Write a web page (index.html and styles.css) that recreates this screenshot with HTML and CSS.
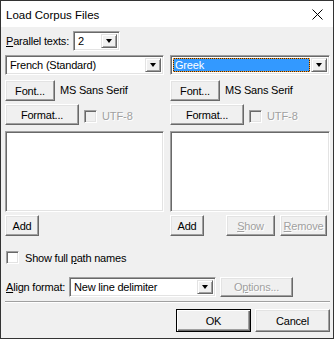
FILE: index.html
```html
<!DOCTYPE html>
<html>
<head>
<meta charset="utf-8">
<link rel="stylesheet" href="styles.css">
</head>
<body>
<div class="window">
  <div class="titlebar">
    <span class="title">Load Corpus Files</span>
    <svg class="close" width="11" height="11" viewBox="0 0 11 11"><path d="M0.5 0.5 L10.5 10.5 M10.5 0.5 L0.5 10.5" stroke="#000" stroke-width="1" fill="none"/></svg>
  </div>
  <div class="content">
    <div class="row parallel">
      <span class="label"><u>P</u>arallel texts:</span>
      <div class="combo combo-par"><span class="val">2</span><span class="arrow"></span></div>
    </div>
    <div class="cols">
      <div class="col">
        <div class="combo combo-lang"><span class="val">French (Standard)</span><span class="arrow"></span></div>
        <div class="row fontrow"><button class="btn btn-font">Font...</button><span class="fontname">MS Sans Serif</span></div>
        <div class="row formatrow"><button class="btn btn-format">Format...</button><span class="chk chk-dis"></span><span class="dis">UTF-8</span></div>
        <div class="listbox"></div>
        <div class="row addrow"><button class="btn btn-add">Add</button></div>
      </div>
      <div class="col">
        <div class="combo combo-lang"><span class="val sel"><span class="selbox">Greek</span></span><span class="arrow"></span></div>
        <div class="row fontrow"><button class="btn btn-font">Font...</button><span class="fontname">MS Sans Serif</span></div>
        <div class="row formatrow"><button class="btn btn-format">Format...</button><span class="chk chk-dis"></span><span class="dis">UTF-8</span></div>
        <div class="listbox"></div>
        <div class="row addrow"><button class="btn btn-add">Add</button><button class="btn btn-show dis"><u>S</u>how</button><button class="btn btn-remove dis"><u>R</u>emove</button></div>
      </div>
    </div>
    <div class="row checkrow"><span class="chk"></span><span class="label">Show full <u>p</u>ath names</span></div>
    <div class="row alignrow">
      <span class="label"><u>A</u>lign format:</span>
      <div class="combo combo-align"><span class="val">New line delimiter</span><span class="arrow"></span></div>
      <button class="btn btn-options dis">O<u>p</u>tions...</button>
    </div>
    <div class="sep"></div>
    <div class="row buttons">
      <button class="btn btn-ok">OK</button>
      <button class="btn btn-cancel">Cancel</button>
    </div>
  </div>
</div>
</body>
</html>
```
FILE: styles.css
```css
* { box-sizing: border-box; }
html, body { margin: 0; padding: 0; background: #f0f0f0; }
body { font-family: "Liberation Sans", Arial, sans-serif; font-size: 11px; color: #000; }
.window {
  width: 334px; height: 339px;
  border: 1px solid #333;
  background: #f0f0f0;
  display: flex; flex-direction: column;
}
.titlebar {
  height: 26px; background: #fff;
  display: flex; align-items: center; justify-content: space-between;
  padding: 0 10px 0 5px;
}
.title { font-size: 11.5px; margin-top: 1px; }
.close { margin-top: 1px; }
.content { padding: 0 3px 0 4px; display: flex; flex-direction: column; }
.row { display: flex; align-items: center; }
.label { letter-spacing: -0.2px; }
u { text-decoration: underline; text-underline-offset: 1px; }

.combo {
  position: relative; height: 20px; background: #fff;
  border: 1px solid; border-color: #a0a0a0 #fff #fff #a0a0a0;
  box-shadow: inset 1px 1px #696969, inset -1px -1px #e3e3e3;
  display: flex; align-items: center; padding: 2px;
}
.combo .val { flex: 1; padding-left: 2px; letter-spacing: -0.2px; white-space: nowrap; height: 100%; display: flex; align-items: center; }
.combo .arrow {
  width: 16px; height: 100%; background: #f0f0f0;
  border: 1px solid; border-color: #e3e3e3 #696969 #696969 #e3e3e3;
  box-shadow: inset 1px 1px #fff, inset -1px -1px #a0a0a0;
  position: relative;
}
.combo .arrow::after {
  content: ""; position: absolute; left: 50%; top: 50%;
  margin-left: -3.5px; margin-top: -2px;
  border-left: 3.5px solid transparent; border-right: 3.5px solid transparent; border-top: 4px solid #000;
}
.parallel { margin-top: 4px; height: 20px; }
.parallel .label { margin-left: 1px; width: 67px; }
.combo-par { width: 47px; }
.cols { display: flex; gap: 6px; margin-top: 4px; }
.col { display: flex; flex-direction: column; }
.col:first-child { width: 159px; }
.col:last-child { width: 160px; }
.combo-lang { width: 100%; }
.val.sel { padding-left: 0; padding-right: 1px; }
.selbox {
  width: 100%; height: 100%; display: flex; align-items: center; color: #fff; padding-left: 1px;
  border: 1px dotted #ff9a20;
  background: linear-gradient(#3399ff, #3399ff) padding-box, linear-gradient(#2a2a2a, #2a2a2a) border-box;
}

.btn {
  font: inherit; color: #000; margin: 0; padding: 0;
  height: 21px; background: #f0f0f0;
  border: 1px solid; border-color: #fff #696969 #696969 #fff;
  box-shadow: inset -1px -1px #a0a0a0, inset 1px 1px #e3e3e3;
  letter-spacing: -0.2px;
}
.dis { color: #a0a0a0; text-shadow: 1px 1px 0 #fff; }
.fontrow { margin-top: 5px; }
.btn-font { width: 50px; }
.fontname { margin-left: 5px; letter-spacing: -0.2px; margin-top: -2px; }
.formatrow { margin-top: 3px; }
.btn-format { width: 74px; }
.chk {
  width: 13px; height: 13px; background: #fff;
  border: 1px solid; border-color: #a0a0a0 #fff #fff #a0a0a0;
  box-shadow: inset 1px 1px #696969, inset -1px -1px #e3e3e3;
}
.chk-dis { background: #f0f0f0; margin-left: 5px; margin-top: 4px; }
.formatrow .dis { margin-left: 5px; margin-top: 3px; letter-spacing: -0.1px; }
.listbox {
  margin-top: 6px; height: 81px; background: #fff;
  border: 1px solid; border-color: #a0a0a0 #fff #fff #a0a0a0;
  box-shadow: inset 1px 1px #696969, inset -1px -1px #e3e3e3;
}
.addrow { margin-top: 3px; }
.btn-add { width: 34px; }
.btn-show { width: 49px; margin-left: 22px; }
.btn-remove { width: 47px; margin-left: 5px; }

.checkrow { margin-top: 15px; padding-left: 1px; }
.checkrow .label { margin-left: 6px; }
.alignrow { margin-top: 13px; height: 20px; }
.alignrow .label { margin-left: 1px; width: 63px; }
.combo-align { width: 147px; }
.btn-options { width: 73px; height: 20px; margin-left: 4px; }
.sep { margin-top: 4px; height: 2px; border-top: 1px solid #a0a0a0; border-bottom: 1px solid #fff; }
.buttons { margin-top: 6px; justify-content: flex-end; gap: 4px; padding-right: 0; }
.btn-ok, .btn-cancel { width: 75px; height: 23px; }
.btn-ok { outline: 1px solid #000; outline-offset: -1px; border-color: #000 #000 #000 #000; box-shadow: inset 1px 1px #fff, inset -1px -1px #696969, inset -2px -2px #a0a0a0; }
```
